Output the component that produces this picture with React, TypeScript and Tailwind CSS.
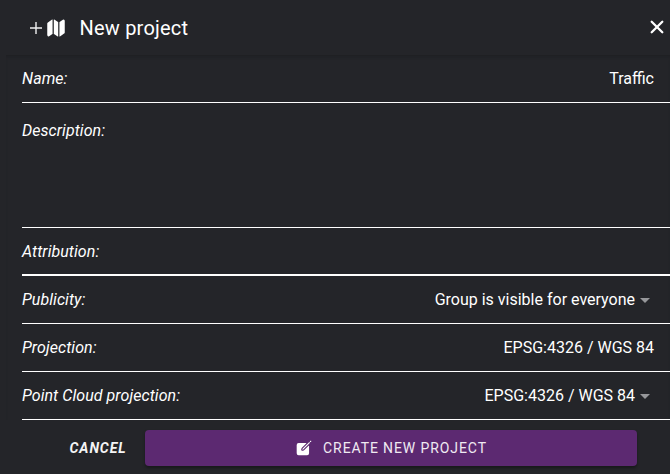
import type { ReactNode } from "react";
import { IoMap, IoCreate } from "react-icons/io5";

function Caret() {
  return (
    <svg width="10" height="5" viewBox="0 0 10 5" className="ml-[5px] mr-1 mt-px block fill-[#96979a]">
      <path d="M0 0h10L5 5z" />
    </svg>
  );
}

function Row({ label, height, children }: { label: string; height: string; children?: ReactNode }) {
  return (
    <div className={`ml-[22px] flex items-start justify-between border-white pr-4 text-base leading-6 ${height}`}>
      <span className="italic tracking-[0.06px]">{label}</span>
      {children && <span className="flex items-center">{children}</span>}
    </div>
  );
}

export default function App() {
  return (
    <div className="flex h-[474px] w-[670px] flex-col overflow-hidden bg-[#242529] font-['Roboto',sans-serif] text-white">
      <header className="flex h-[55px] shrink-0 items-center pl-[30px] pr-[6px]">
        <svg width="12" height="12" viewBox="0 0 12 12" className="block" stroke="#f0f0f0" strokeWidth="1.4">
          <path d="M6 0v12M0 6h12" />
        </svg>
        <IoMap className="ml-[4px] size-5" />
        <h1 className="ml-[13.5px] text-xl font-normal leading-7 tracking-[0.2px]">New project</h1>
        <svg width="14" height="14" viewBox="0 0 14 14" className="-mt-[2px] ml-auto block" stroke="white" strokeWidth="2.3" strokeLinecap="round">
          <path d="M1.7 1.7l10.6 10.6M12.3 1.7l-10.6 10.6" />
        </svg>
      </header>
      <main className="ml-[6px] h-[365px] shrink-0 border-t border-[#1f2023] shadow-[inset_0_2px_2px_#212226]">
        <div className="-ml-[6px]">
          <Row label="Name:" height="h-[47px] border-b pt-[11px]">Traffic</Row>
          <Row label="Description:" height="h-[125px] border-b pt-4" />
          <Row label="Attribution:" height="h-[48px] border-b-2 pt-3" />
          <Row label="Publicity:" height="h-[48px] border-b pt-3">Group is visible for everyone<Caret /></Row>
          <Row label="Projection:" height="h-[48px] border-b pt-3">EPSG:4326 / WGS 84</Row>
          <Row label="Point Cloud projection:" height="h-[48px] border-b pt-3">EPSG:4326 / WGS 84<Caret /></Row>
        </div>
      </main>
      <footer className="flex h-[54px] shrink-0 items-start pt-[10px]">
        <button className="ml-[50px] h-9 w-[95px] pl-px text-sm font-bold italic tracking-[0.9px] text-[#f5f5f5]">CANCEL</button>
        <button className="flex h-9 w-[492px] items-center justify-center rounded bg-[#5c2971] text-sm font-normal tracking-[0.9px] shadow-[0_2px_3px_rgba(0,0,0,0.35)]">
          <IoCreate className="mr-[10px] size-[18px]" />
          <span className="text-[#f0eaf2]">CREATE NEW PROJECT</span>
        </button>
      </footer>
    </div>
  );
}
